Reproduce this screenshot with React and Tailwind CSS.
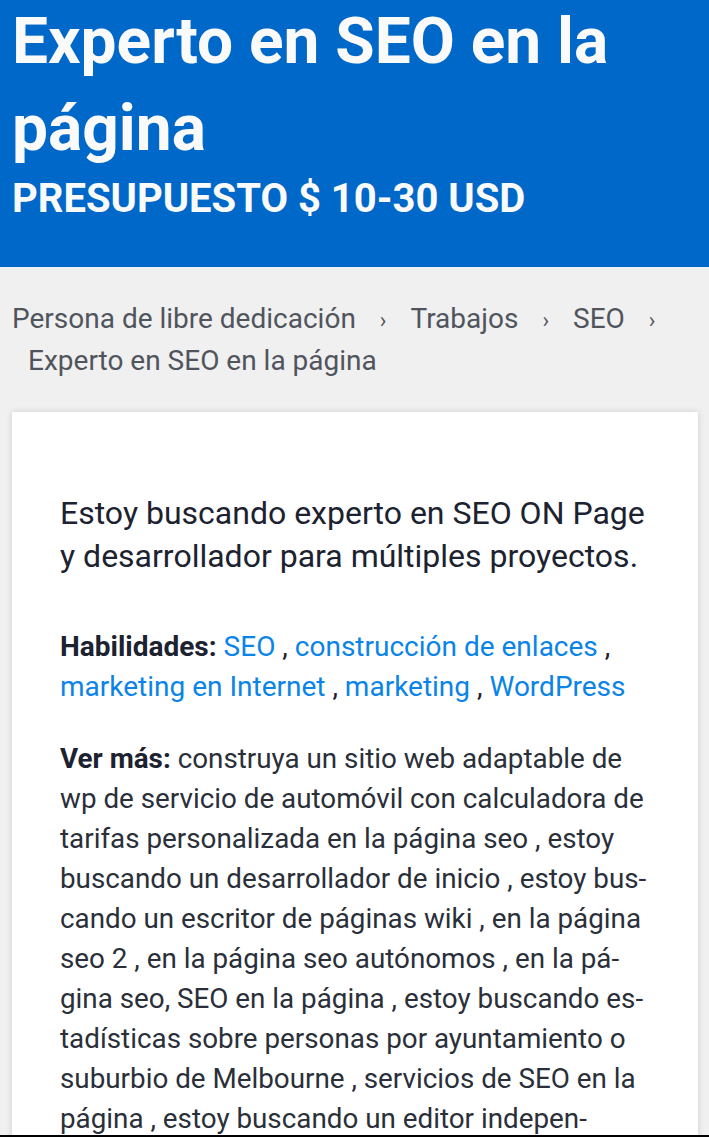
import React from "react";

const skills = [
  "SEO",
  "construcción de enlaces",
  "marketing en Internet",
  "marketing",
  "WordPress",
];

const crumbs = ["Persona de libre dedicación", "Trabajos", "SEO"];

export default function App() {
  return (
    <div lang="es" className="min-h-screen bg-[#f0f0f0] font-['Roboto',sans-serif] overflow-hidden">
      {/* Header */}
      <header className="bg-[#0068c8] px-3 pb-[45px] text-[#fafafa]">
        <h1 className="-mt-[2px] text-[64px] font-bold leading-[87px]">
          Experto en SEO en la página
        </h1>
        <div className="mt-[4px] text-[40px] font-bold leading-[46px]">
          PRESUPUESTO $ 10-30 USD
        </div>
      </header>

      {/* Breadcrumbs */}
      <nav className="px-3 pt-[32px] pb-[31px] text-[28px] leading-[40px] text-[#50555d]">
        {crumbs.map((c) => (
          <React.Fragment key={c}>
            <span>{c}</span>
            <span className="mx-[24px] text-[22px]">›</span>
          </React.Fragment>
        ))}
        <span className="inline-block pl-4">Experto en SEO en la página</span>
      </nav>

      {/* Card */}
      <div className="ml-3 mr-[11px] bg-white pl-12 pr-[48px] pt-[80px] pb-10 text-[#1c2230] shadow-[0_0_6px_rgba(0,0,0,0.15)]">
        <p className="text-[32px] leading-[43px]">
          Estoy buscando experto en SEO ON Page y desarrollador para múltiples proyectos.
        </p>

        <p className="mt-[49px] text-[28px] leading-[40px]">
          <b className="font-bold">Habilidades:</b>{" "}
          {skills.map((s, i) => (
            <React.Fragment key={s}>
              <a href="#" className="text-[#0a84e8]">{s}</a>
              {i < skills.length - 1 ? " , " : ""}
            </React.Fragment>
          ))}
        </p>

        <p className="mt-[32px] text-[27.8px] leading-[40px] text-[#2a2f3a]">
          <b className="font-bold text-[#1c2230]">Ver más:</b> construya un sitio web adaptable de wp de
          servicio de automóvil con calculadora de tarifas personalizada en la página seo , estoy
          buscando un desarrollador de inicio , estoy bus&shy;cando un escritor de páginas wiki , en la
          página seo 2 , en la página seo autónomos , en la pá&shy;gina seo, SEO en la página , estoy
          buscando es&shy;tadísticas sobre personas por ayuntamiento o suburbio de Melbourne , servicios
          de SEO en la página , estoy buscando un editor indepen&shy;diente de SEO en la página ,
          servicios de optimización en la página
        </p>
      </div>

      <div className="fixed bottom-0 left-0 right-0 h-[2px] bg-black" />
    </div>
  );
}
